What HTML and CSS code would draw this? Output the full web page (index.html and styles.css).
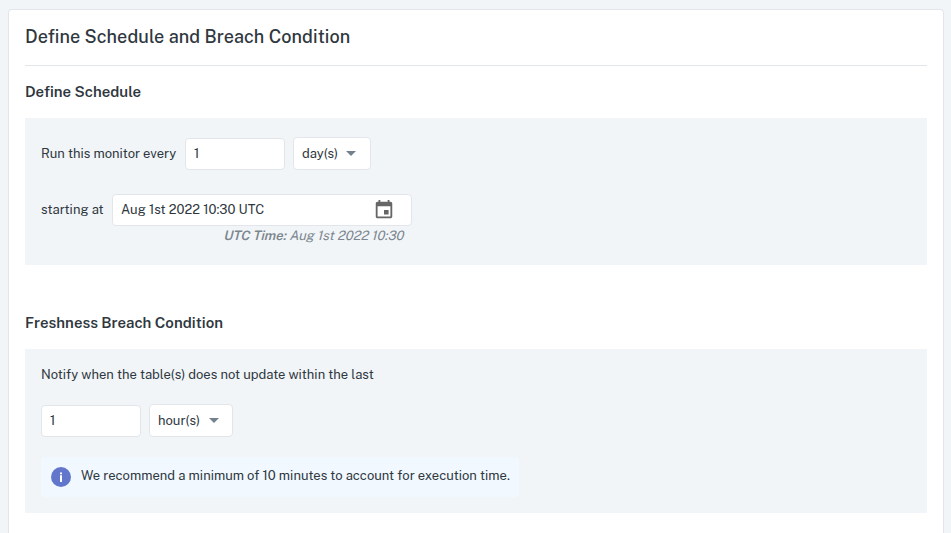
FILE: index.html
```html
<!DOCTYPE html>
<html lang="en">
<head>
<meta charset="utf-8">
<title>Define Schedule and Breach Condition</title>
<link rel="stylesheet" href="styles.css">
</head>
<body>
<main class="card">
  <h1 class="title">Define Schedule and Breach Condition</h1>
  <h2 class="heading">Define Schedule</h2>
  <section class="panel panel-schedule">
    <div class="row">
      <span class="label run-label">Run this monitor every</span>
      <div class="field number">1</div>
      <div class="field select day">day(s)<svg class="caret" viewBox="0 0 10 5"><path d="M0 0h10L5 5z"/></svg></div>
    </div>
    <div class="row start-row">
      <span class="label start-label">starting at</span>
      <div class="field date">Aug 1st 2022 10:30 UTC
        <svg class="calendar" viewBox="0 0 24 24"><path d="M17 12h-5v5h5v-5zM16 1v2H8V1H6v2H5c-1.11 0-1.99.9-1.99 2L3 19c0 1.1.89 2 2 2h14c1.1 0 2-.9 2-2V5c0-1.1-.9-2-2-2h-1V1h-2zm3 18H5V8h14v11z"/></svg>
      </div>
    </div>
    <p class="utc"><span class="slanted"><b>UTC Time:</b> Aug 1st 2022 10:30</span></p>
  </section>
  <h2 class="heading heading-breach">Freshness Breach Condition</h2>
  <section class="panel panel-breach">
    <p class="notify">Notify when the table(s) does not update within the last</p>
    <div class="row">
      <div class="field number">1</div>
      <div class="field select hour">hour(s)<svg class="caret" viewBox="0 0 10 5"><path d="M0 0h10L5 5z"/></svg></div>
    </div>
    <div class="info">
      <svg class="info-icon" viewBox="0 0 20 20"><circle cx="10" cy="10" r="10" fill="#6277cb"/><path d="M9 5.5h2v1.7H9zM9 8.3h2V15H9z" fill="#fff"/></svg>
      <span class="info-text">We recommend a minimum of 10 minutes to account for execution time.</span>
    </div>
  </section>
</main>
</body>
</html>
```
FILE: styles.css
```css
* { box-sizing: border-box; }
html { background: #f1f5f8; }
body {
  margin: 0;
  height: 533px;
  padding: 9px 7px 0 8px;
  font: 13px/20px "Public Sans", Inter, "Liberation Sans", sans-serif;
  color: #2f3740;
}
h1, h2, p { margin: 0; }
.card {
  height: 524px;
  padding: 0 16px;
  background: #fff;
  border: 1px solid #e2e6eb;
  border-bottom: 0;
  border-radius: 4px 4px 0 0;
}
.title {
  height: 56px;
  padding-top: 15px;
  border-bottom: 1px solid #e2e6e9;
  font-size: 18px;
  line-height: 24px;
  font-weight: 500;
  letter-spacing: 0.06px;
  white-space: nowrap;
}
.heading {
  height: 52px;
  padding-top: 16px;
  font-size: 15px;
  line-height: 20px;
  font-weight: 600;
}
.heading-breach { height: 36px; padding-top: 0; margin-top: 48px; }
.panel { padding: 0 16px; background: #f1f5f8; }
.panel-schedule { height: 147px; padding-top: 19px; }
.panel-breach { height: 164px; padding-top: 16px; }
.row { display: flex; align-items: flex-end; gap: 8px; height: 33px; white-space: nowrap; }
.label { height: 26px; }
.run-label { width: 136px; }
.start-label { width: 63px; }
.field {
  display: flex;
  align-items: center;
  height: 32px;
  padding: 0 8px;
  background: #fff;
  border: 1px solid #e2e6eb;
  border-radius: 4px;
}
.number { width: 100px; }
.select { height: 33px; justify-content: space-between; padding-right: 13px; }
.day { width: 78px; padding-right: 14px; }
.hour { width: 84px; }
.caret { width: 10px; height: 5px; fill: #74818c; }
.start-row { margin-top: 23px; }
.date { width: 300px; justify-content: space-between; padding-right: 16px; }
.calendar { width: 22px; height: 22px; fill: #666; }
.utc { width: 362px; text-align: right; color: #7b858e; }
.utc b { font-weight: 600; }
.slanted { display: inline-block; transform: skewX(-14deg); transform-origin: 0 15px; }
.notify { height: 39px; white-space: nowrap; }
.info {
  display: flex;
  align-items: center;
  gap: 10px;
  width: 478px;
  height: 40px;
  margin-top: 20px;
  padding-left: 10px;
  background: #f1f8ff;
  border-radius: 4px;
  white-space: nowrap;
}
.info-icon { width: 20px; height: 20px; flex: none; }
.info-text { margin-top: -2px; }
```
